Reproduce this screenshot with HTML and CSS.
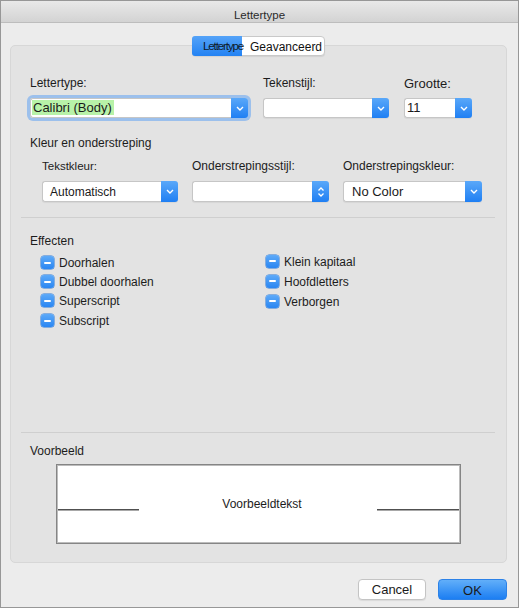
FILE: index.html
```html
<!DOCTYPE html>
<html lang="nl">
<head>
<meta charset="utf-8">
<title>Lettertype</title>
<link rel="stylesheet" href="styles.css">
</head>
<body>
<div class="window">
  <div class="titlebar">Lettertype</div>
  <div class="content">
    <div class="tabs">
      <div class="tab tab-active">Lettertype</div>
      <div class="tab">Geavanceerd</div>
    </div>
    <div class="panel">
      <div class="row1">
        <div class="label">Lettertype:</div>
        <div class="label">Tekenstijl:</div>
        <div class="label label-lg">Grootte:</div>
        <div class="select select-focus">
          <div class="select-field field-tight"><span class="hl">Calibri (Body)</span></div>
          <div class="select-btn"><svg width="8" height="5" viewBox="0 0 8 5"><polyline points="1,1 4,4 7,1" fill="none" stroke="#fff" stroke-width="1.4"/></svg></div>
        </div>
        <div class="select">
          <div class="select-field"></div>
          <div class="select-btn"><svg width="8" height="5" viewBox="0 0 8 5"><polyline points="1,1 4,4 7,1" fill="none" stroke="#fff" stroke-width="1.4"/></svg></div>
        </div>
        <div class="select">
          <div class="select-field field-tight field-13">11</div>
          <div class="select-btn"><svg width="8" height="5" viewBox="0 0 8 5"><polyline points="1,1 4,4 7,1" fill="none" stroke="#fff" stroke-width="1.4"/></svg></div>
        </div>
      </div>

      <div class="heading heading-kleur">Kleur en onderstreping</div>
      <div class="row2">
        <div class="label label-sm">Tekstkleur:</div>
        <div class="label">Onderstrepingsstijl:</div>
        <div class="label">Onderstrepingskleur:</div>
        <div class="select select-tall">
          <div class="select-field field-auto">Automatisch</div>
          <div class="select-btn"><svg width="8" height="5" viewBox="0 0 8 5"><polyline points="1,1 4,4 7,1" fill="none" stroke="#fff" stroke-width="1.4"/></svg></div>
        </div>
        <div class="select select-tall">
          <div class="select-field"></div>
          <div class="select-btn"><svg width="8" height="12" viewBox="0 0 8 12"><polyline points="1.5,4.5 4,2 6.5,4.5" fill="none" stroke="#fff" stroke-width="1.3"/><polyline points="1.5,7.5 4,10 6.5,7.5" fill="none" stroke="#fff" stroke-width="1.3"/></svg></div>
        </div>
        <div class="select select-tall">
          <div class="select-field field-nocolor">No Color</div>
          <div class="select-btn"><svg width="8" height="5" viewBox="0 0 8 5"><polyline points="1,1 4,4 7,1" fill="none" stroke="#fff" stroke-width="1.4"/></svg></div>
        </div>
      </div>

      <div class="sep sep-top"></div>

      <div class="heading heading-effects">Effecten</div>
      <div class="effects">
        <div class="effects-col">
          <div class="check"><span class="box"></span><span>Doorhalen</span></div>
          <div class="check"><span class="box"></span><span>Dubbel doorhalen</span></div>
          <div class="check"><span class="box"></span><span>Superscript</span></div>
          <div class="check check-last"><span class="box"></span><span>Subscript</span></div>
        </div>
        <div class="effects-col effects-col-right">
          <div class="check check-wide"><span class="box"></span><span>Klein kapitaal</span></div>
          <div class="check check-wide"><span class="box"></span><span>Hoofdletters</span></div>
          <div class="check check-wide"><span class="box"></span><span>Verborgen</span></div>
        </div>
      </div>

      <div class="sep sep-bottom"></div>

      <div class="heading heading-preview">Voorbeeld</div>
      <div class="preview">
        <div class="preview-line"></div>
        <div class="preview-text">Voorbeeldtekst</div>
        <div class="preview-line"></div>
      </div>
    </div>

    <div class="buttons">
      <div class="btn btn-cancel">Cancel</div>
      <div class="btn btn-ok">OK</div>
    </div>
  </div>
</div>
</body>
</html>
```

FILE: styles.css
```css
html, body {
  margin: 0;
  padding: 0;
  background: #ffffff;
}

body {
  font-family: "Liberation Sans", Arial, sans-serif;
  color: #1c1c1c;
}

.window {
  width: 519px;
  height: 608px;
  box-sizing: border-box;
  border: 1px solid #979797;
  background: #ececec;
  display: flex;
  flex-direction: column;
}

.titlebar {
  height: 22px;
  box-sizing: border-box;
  padding-top: 7px;
  line-height: 14px;
  font-size: 11.5px;
  text-align: center;
  color: #2a2a2a;
  background: linear-gradient(#e9e9e9, #d3d3d3);
  border-bottom: 1px solid #bdbdbd;
}

.content {
  padding: 0 11px 0 9px;
}

.tabs {
  position: relative;
  z-index: 1;
  display: flex;
  width: 133px;
  height: 20px;
  box-sizing: border-box;
  margin: 13px auto 0;
  border: 1px solid #c9c9c9;
  border-radius: 4px;
  background: #ffffff;
  box-shadow: 0 1px 1px rgba(0, 0, 0, 0.08);
}

.tab {
  line-height: 16px;
  padding-top: 2px;
  font-size: 12px;
  color: #111;
  white-space: nowrap;
}

.tab-active {
  width: 50px;
  box-sizing: border-box;
  padding-left: 11px;
  padding-top: 2px;
  font-size: 11.5px;
  letter-spacing: -1.1px;
  color: #0f1a2a;
  background: linear-gradient(#55a3f8, #2382f3);
  border-radius: 3px 0 0 3px;
  margin: -1px 0 -1px -1px;
  height: 20px;
}

.tab-active + .tab {
  padding-left: 8px;
}

.panel {
  margin-top: -11px;
  height: 518px;
  box-sizing: border-box;
  border: 1px solid #d7d7d7;
  border-radius: 5px;
  background: #e3e3e3;
  padding: 30px 0 0 19px;
}

.label {
  font-size: 12px;
  line-height: 15px;
  white-space: nowrap;
}

.label-lg {
  font-size: 13px;
}

.label-sm {
  font-size: 11.5px;
}

.row1 {
  display: grid;
  grid-template-columns: 218px 126px 68px;
  column-gap: 15px;
  row-gap: 7px;
}

.row2 {
  display: grid;
  grid-template-columns: 136px 137px 139px;
  column-gap: 14px;
  row-gap: 7px;
  margin-top: 8px;
  padding-left: 12px;
}

.select {
  display: flex;
  height: 20px;
  border-radius: 3px;
  box-shadow: 0 1px 1px rgba(0, 0, 0, 0.06);
}

.select-tall {
  height: 21px;
}

.select-focus {
  box-shadow: 0 0 0 3px #9cc0ec;
}

.select-field {
  flex: 1;
  min-width: 0;
  box-sizing: border-box;
  background: #ffffff;
  border: 1px solid #c6c6c6;
  border-right: none;
  border-radius: 3px 0 0 3px;
  font-size: 13px;
  line-height: 18px;
  color: #1a1a1a;
  white-space: nowrap;
  overflow: hidden;
}

.select-tall .select-field {
  line-height: 19px;
}

.field-tight {
  padding-left: 2px;
}

.hl {
  background: #b8f2a8;
  padding: 0 2px 0 1px;
  margin-left: -1px;
}

.field-auto {
  font-size: 12px;
  padding-left: 7px;
  padding-top: 2px;
}

.select-tall .field-auto {
  line-height: 17px;
}

.field-nocolor {
  padding-left: 8px;
}

.select-btn {
  width: 17px;
  flex: none;
  display: flex;
  align-items: center;
  justify-content: center;
  background: linear-gradient(#5aa8f9, #1f7ff3);
  border-radius: 0 3px 3px 0;
}

.heading {
  font-size: 12px;
  line-height: 15px;
}

.heading-kleur {
  margin-top: 18px;
}

.sep {
  height: 1px;
  background: #cfcfcf;
  margin-left: -9px;
  margin-right: 11px;
}

.sep-top {
  margin-top: 15px;
}

.heading-effects {
  margin-top: 16px;
}

.effects {
  display: grid;
  grid-template-columns: 225px 1fr;
  margin-top: 5px;
  padding-left: 11px;
}

.effects-col-right {
  margin-top: -2px;
}

.check {
  display: flex;
  align-items: center;
  height: 19px;
  font-size: 12px;
  line-height: 15px;
  white-space: nowrap;
}

.check-last {
  margin-top: 1px;
}

.check-wide {
  height: 20px;
}

.box {
  position: relative;
  flex: none;
  width: 13px;
  height: 13px;
  margin-right: 5px;
  margin-bottom: 2px;
  border-radius: 3px;
  background: linear-gradient(#5eaaf8, #2a86f2);
  box-shadow: 0 0 0 0.5px #2a78d8;
}

.box::after {
  content: "";
  position: absolute;
  left: 3px;
  right: 3px;
  top: 5.5px;
  height: 2px;
  background: #ffffff;
  border-radius: 1px;
}

.sep-bottom {
  margin-top: 101px;
}

.heading-preview {
  margin-top: 11px;
}

.preview {
  display: grid;
  grid-template-columns: 81px 1fr 82px;
  align-items: center;
  width: 405px;
  height: 80px;
  box-sizing: border-box;
  margin: 5px 0 0 26px;
  padding: 0 1px;
  background: #ffffff;
  border: 1px solid #858585;
  box-shadow: inset 0 0 0 1px #bcbcbc;
}

.preview-line {
  height: 1px;
  margin-top: 10px;
  background: #505050;
  box-shadow: 0 1px 0 #a8a8a8;
}

.preview-text {
  text-align: center;
  font-size: 12px;
  line-height: 15px;
  padding-left: 8px;
}

.buttons {
  display: flex;
  justify-content: flex-end;
  gap: 12px;
  margin-top: 16px;
}

.btn {
  height: 21px;
  box-sizing: border-box;
  border-radius: 4px;
  font-size: 13px;
  line-height: 19px;
  text-align: center;
  color: #1a1a1a;
}

.btn-cancel {
  width: 68px;
  background: #ffffff;
  border: 1px solid #c4c4c4;
  box-shadow: 0 1px 1px rgba(0, 0, 0, 0.08);
}

.btn-ok {
  width: 69px;
  background: linear-gradient(#62aff9, #1c7ef2);
  border: 1px solid #2c82e8;
  line-height: 21px;
}
```
